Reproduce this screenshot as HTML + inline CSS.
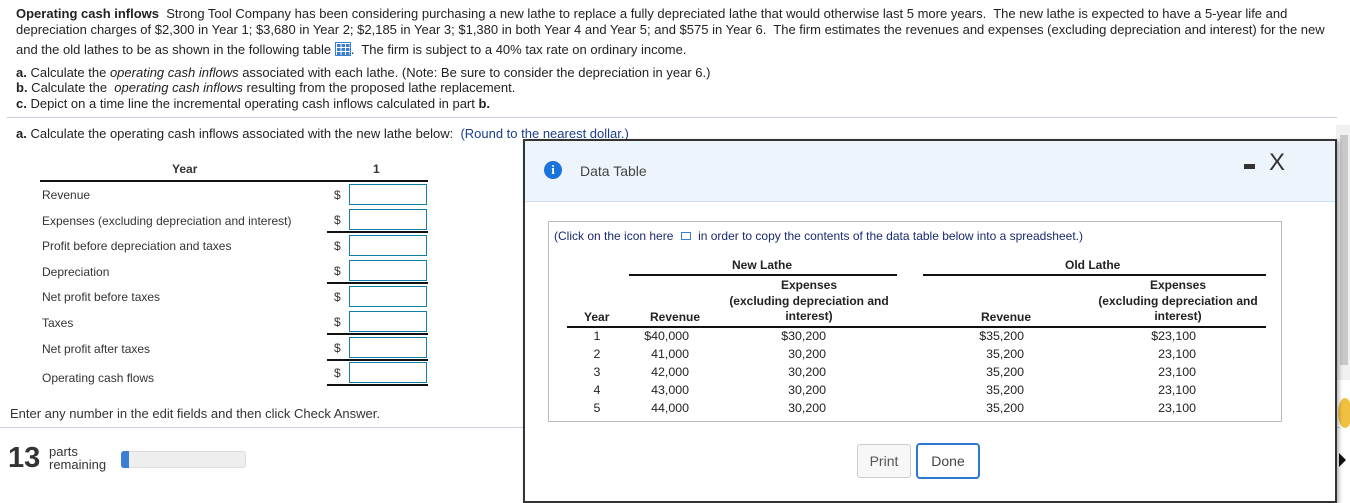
<!DOCTYPE html>
<html><head><meta charset="utf-8"><style>
body{margin:0;width:1350px;height:489px;overflow:hidden;background:#fff;font-family:"Liberation Sans",sans-serif;color:#222;position:relative}
.a{position:absolute;white-space:nowrap}
.t{font-size:13px;letter-spacing:0;transform-origin:0 0}
.lbl{font-size:12px;color:#333}
.inp{position:absolute;left:349px;width:76px;height:19px;border:1px solid #0e7fa8;background:#fff}
.ln{position:absolute;left:327px;width:101px;height:1.5px;background:#111}
.dl{position:absolute;left:334px;font-size:12px;color:#333}
td{padding:0;font-size:12.4px;line-height:18px}
</style></head><body>
<div class="a t" style="left:16px;top:6px"><b>Operating cash inflows</b>&nbsp; Strong Tool Company has been considering purchasing a new lathe to replace a fully depreciated lathe that would otherwise last 5 more years.&nbsp; The new lathe is expected to have a 5-year life and</div>
<div class="a t" style="left:16px;top:22px">depreciation charges of $2,300 in Year 1; $3,680 in Year 2; $2,185 in Year 3; $1,380 in both Year 4 and Year 5; and $575 in Year 6.&nbsp; The firm estimates the revenues and expenses (excluding depreciation and interest) for the new</div>
<div class="a t" style="left:16px;top:42px">and the old lathes to be as shown in the following table <span style="display:inline-block;width:14px;height:12px;background:#3a7fd5;vertical-align:-2px;background-image:linear-gradient(#fff 1px,transparent 1px),linear-gradient(90deg,#fff 1px,transparent 1px);background-size:4.5px 4px;border:1px solid #3a7fd5"></span>.&nbsp; The firm is subject to a 40% tax rate on ordinary income.</div>
<div class="a t" style="left:16px;top:65px"><b>a.</b> Calculate the <i>operating cash inflows</i> associated with each lathe. (Note: Be sure to consider the depreciation in year 6.)</div>
<div class="a t" style="left:16px;top:80px"><b>b.</b> Calculate the&nbsp; <i>operating cash inflows</i> resulting from the proposed lathe replacement.</div>
<div class="a t" style="left:16px;top:96px"><b>c.</b> Depict on a time line the incremental operating cash inflows calculated in part <b>b.</b></div>
<div class="a" style="left:7px;top:117px;width:1330px;height:1px;background:#ccd"></div>
<div class="a t" style="left:16px;top:126px"><b>a.</b> Calculate the operating cash inflows associated with the new lathe below:&nbsp; <span style="color:#1a3d8f">(Round to the nearest dollar.)</span></div>

<div class="a lbl" style="left:172px;top:162px;font-weight:bold">Year</div>
<div class="a lbl" style="left:373px;top:162px;font-weight:bold">1</div>
<div class="a" style="left:40px;top:180px;width:388px;height:1.5px;background:#111"></div>
<div class="a lbl" style="left:42px;top:188px">Revenue</div>
<div class="a lbl" style="left:42px;top:214px">Expenses (excluding depreciation and interest)</div>
<div class="a lbl" style="left:42px;top:239px">Profit before depreciation and taxes</div>
<div class="a lbl" style="left:42px;top:265px">Depreciation</div>
<div class="a lbl" style="left:42px;top:290px">Net profit before taxes</div>
<div class="a lbl" style="left:42px;top:316px">Taxes</div>
<div class="a lbl" style="left:42px;top:342px">Net profit after taxes</div>
<div class="a lbl" style="left:42px;top:371px">Operating cash flows</div>
<div class="dl" style="top:188px">$</div><div class="inp" style="top:184px"></div>
<div class="dl" style="top:213px">$</div><div class="inp" style="top:209px"></div>
<div class="ln" style="top:231px"></div>
<div class="dl" style="top:239px">$</div><div class="inp" style="top:235px"></div>
<div class="dl" style="top:264px">$</div><div class="inp" style="top:260px"></div>
<div class="ln" style="top:282px"></div>
<div class="dl" style="top:290px">$</div><div class="inp" style="top:286px"></div>
<div class="dl" style="top:315px">$</div><div class="inp" style="top:311px"></div>
<div class="ln" style="top:333px"></div>
<div class="dl" style="top:341px">$</div><div class="inp" style="top:337px"></div>
<div class="ln" style="top:359px"></div>
<div class="dl" style="top:366px">$</div><div class="inp" style="top:362px"></div>
<div class="ln" style="top:384px"></div>
<div class="a" style="left:10px;top:406px;font-size:13px;color:#333">Enter any number in the edit fields and then click Check Answer.</div>
<div class="a" style="left:0;top:427px;width:1340px;height:1px;background:#ccd"></div>
<div class="a" style="left:8px;top:442px;font-size:29px;font-weight:bold;color:#333">13</div>
<div class="a" style="left:49px;top:445px;font-size:13px;color:#333;line-height:13px">parts<br>remaining</div>
<div class="a" style="left:121px;top:451px;width:123px;height:15px;border-radius:3px;background:#eee;border:1px solid #ddd"></div>
<div class="a" style="left:121px;top:451px;width:8px;height:17px;border-radius:3px 0 0 3px;background:#3a7fd5"></div>

<div class="a" style="left:1336px;top:125px;width:14px;height:255px;background:#f0f0f0"></div>
<div class="a" style="left:1340px;top:135px;width:8px;height:230px;background:#c8c8c8"></div>
<div class="a" style="left:1338px;top:398px;width:14px;height:30px;border-radius:50%;background:#f0c040"></div>
<div class="a" style="left:1318px;top:453px;width:0;height:0;border-right:7px solid #111;border-top:7px solid transparent;border-bottom:7px solid transparent"></div>
<div class="a" style="left:1339px;top:453px;width:0;height:0;border-left:7px solid #111;border-top:7px solid transparent;border-bottom:7px solid transparent"></div>

<div class="a" style="left:523px;top:139px;width:810px;height:360px;border:2px solid #333;background:#fff;box-shadow:2px 2px 4px rgba(0,0,0,.3)">
 <div style="position:absolute;left:0;top:0;width:810px;height:60px;background:#eef4fc;border-bottom:1px solid #cfe0f5"></div>
 <div class="a" style="left:19px;top:20px;width:18px;height:18px;border-radius:50%;background:#1a73d9;color:#fff;font:bold 13px 'Liberation Serif',serif;text-align:center;line-height:18px">i</div>
 <div class="a" style="left:55px;top:22px;font-size:14px;color:#444">Data Table</div>
 <div class="a" style="left:719px;top:23px;width:11px;height:5px;background:#333"></div>
 <div class="a" style="left:744px;top:8px;font-size:24px;color:#333">X</div>
 <div class="a" style="left:23px;top:80px;width:732px;height:199px;border:1px solid #bbb">
  <div class="a" style="left:5px;top:7px;font-size:12px;color:#1a2a6f">(Click on the icon here <span style="display:inline-block;width:8px;height:6px;border:1px solid #3a7fd5;margin:0 4px"></span> in order to copy the contents of the data table below into a spreadsheet.)</div>
  <div class="a" style="left:183px;top:36px;font-size:12px;font-weight:bold">New Lathe</div>
  <div class="a" style="left:516px;top:36px;font-size:12px;font-weight:bold">Old Lathe</div>
  <div class="a" style="left:80px;top:52px;width:268px;height:1.5px;background:#111"></div>
  <div class="a" style="left:374px;top:52px;width:343px;height:1.5px;background:#111"></div>
  <div class="a" style="left:172px;top:56px;font-size:12px;font-weight:bold;text-align:center;line-height:15.5px;width:176px">Expenses<br>(excluding depreciation and<br>interest)</div>
  <div class="a" style="left:541px;top:56px;font-size:12px;font-weight:bold;text-align:center;line-height:15.5px;width:176px">Expenses<br>(excluding depreciation and<br>interest)</div>
  <div class="a" style="left:35px;top:88px;font-size:12px;font-weight:bold">Year</div>
  <div class="a" style="left:101px;top:88px;font-size:12px;font-weight:bold">Revenue</div>
  <div class="a" style="left:432px;top:88px;font-size:12px;font-weight:bold">Revenue</div>
  <div class="a" style="left:18px;top:104px;width:699px;height:1.5px;background:#111"></div>
  <table class="a" style="left:18px;top:105px;border-collapse:collapse">
   <tr><td style="width:60px;text-align:center">1</td><td style="width:62px;text-align:right">$40,000</td><td style="width:137px;text-align:right">$30,200</td><td style="width:198px;text-align:right">$35,200</td><td style="width:172px;text-align:right">$23,100</td></tr>
   <tr><td style="text-align:center">2</td><td style="text-align:right">41,000</td><td style="text-align:right">30,200</td><td style="text-align:right">35,200</td><td style="text-align:right">23,100</td></tr>
   <tr><td style="text-align:center">3</td><td style="text-align:right">42,000</td><td style="text-align:right">30,200</td><td style="text-align:right">35,200</td><td style="text-align:right">23,100</td></tr>
   <tr><td style="text-align:center">4</td><td style="text-align:right">43,000</td><td style="text-align:right">30,200</td><td style="text-align:right">35,200</td><td style="text-align:right">23,100</td></tr>
   <tr><td style="text-align:center">5</td><td style="text-align:right">44,000</td><td style="text-align:right">30,200</td><td style="text-align:right">35,200</td><td style="text-align:right">23,100</td></tr>
  </table>
 </div>
 <div class="a" style="left:332px;top:303px;width:52px;height:32px;border:1px solid #ccc;border-radius:3px;background:#f7f7f7;font-size:14px;color:#555;text-align:center;line-height:32px">Print</div>
 <div class="a" style="left:391px;top:302px;width:60px;height:32px;border:2px solid #2a78d0;border-radius:4px;background:#fff;font-size:14px;color:#444;text-align:center;line-height:32px">Done</div>
</div>
</body></html>
